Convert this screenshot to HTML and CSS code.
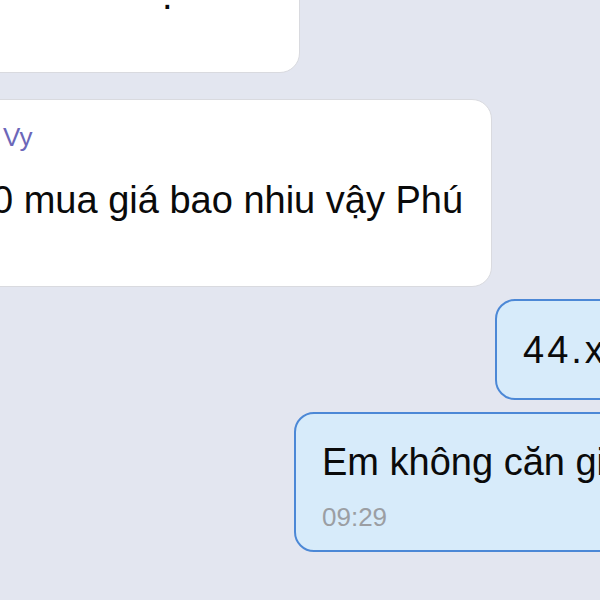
FILE: index.html
```html
<!DOCTYPE html>
<html lang="vi">
<head>
<meta charset="utf-8">
<title>Chat</title>
<link rel="stylesheet" href="styles.css">
</head>
<body>
<main class="chat">
  <div class="bubble in first"><p class="text dot-line">.</p></div>
  <div class="bubble in second">
    <p class="name">Vy</p>
    <p class="text">0 mua giá bao nhiu vậy Phú</p>
  </div>
  <div class="bubble out third"><p class="text wide">44.xxx</p></div>
  <div class="bubble out fourth">
    <p class="text">Em không căn giá đâu ạ</p>
    <p class="time">09:29</p>
  </div>
</main>
</body>
</html>
```
FILE: styles.css
```css
* { box-sizing: border-box; margin: 0; padding: 0; }
html, body {
  width: 600px;
  height: 600px;
  overflow: hidden;
  background: #e3e6f0;
  font-family: "Liberation Sans", Arial, sans-serif;
}
.chat {
  display: flex;
  flex-direction: column;
  gap: 12px;
}
.bubble {
  white-space: nowrap;
  overflow: hidden;
  border-radius: 20px;
}
.in {
  background: #ffffff;
  border: 1.5px solid #d9dadf;
  margin-left: -40px;
  align-self: flex-start;
}
.out {
  background: #d7ebfa;
  border: 2px solid #4c88d6;
  align-self: flex-end;
  margin-right: -120px;
}
.text {
  font-size: 38px;
  line-height: 46px;
  color: #0a0a0a;
}
.wide {
  letter-spacing: 3px;
}
.first {
  width: 340px;
  height: 153px;
  margin-top: -80px;
  margin-bottom: 14px;
  padding: 52px 0 0 201px;
}
.second {
  width: 532px;
  padding: 21px 0 63px 31px;
}
.name {
  font-size: 26px;
  line-height: 32px;
  color: #6c67b9;
  margin-left: 11px;
  margin-bottom: 24px;
}
.third {
  width: 225px;
  padding: 26px 0 25px 26px;
}
.fourth {
  width: 426px;
  padding: 25px 0 17px 26px;
}
.time {
  font-size: 26px;
  line-height: 32px;
  color: #9b9ea3;
  margin-top: 16px;
}
```
